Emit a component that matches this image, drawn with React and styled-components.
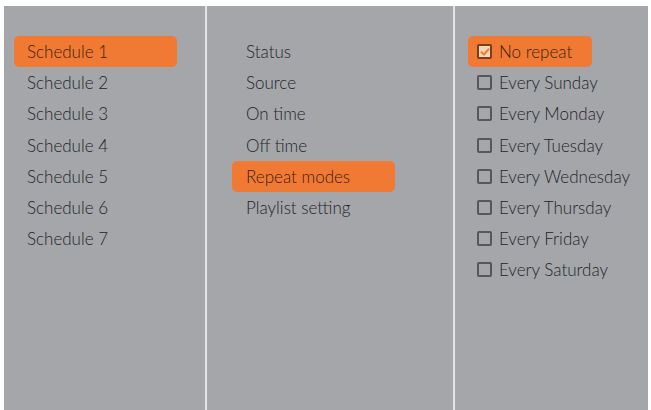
import React from "react";
import styled, { createGlobalStyle } from "styled-components";

const schedules = [
  "Schedule 1",
  "Schedule 2",
  "Schedule 3",
  "Schedule 4",
  "Schedule 5",
  "Schedule 6",
  "Schedule 7",
];

const settings = [
  "Status",
  "Source",
  "On time",
  "Off time",
  "Repeat modes",
  "Playlist setting",
];

const repeats = [
  "No repeat",
  "Every Sunday",
  "Every Monday",
  "Every Tuesday",
  "Every Wednesday",
  "Every Thursday",
  "Every Friday",
  "Every Saturday",
];

const Check = ({ checked }) => (
  <Box checked={checked}>
    {checked && (
      <svg width="10" height="10" viewBox="0 0 10 10">
        <path
          d="M1.5 5.2 L4 7.6 L8.6 2.2"
          fill="none"
          stroke="#f07a30"
          strokeWidth="2"
          strokeLinecap="round"
          strokeLinejoin="round"
        />
      </svg>
    )}
  </Box>
);

const App = () => {
  return (
    <>
      <GlobalStyle />
      <Screen>
        <Column width="201px" inset="10px" pad="13px">
          {schedules.map((s, i) => (
            <Item key={s} active={i === 0}>
              {s}
            </Item>
          ))}
        </Column>
        <Divider />
        <Column width="246px" inset="25px" pad="14px">
          {settings.map((s) => (
            <Item key={s} active={s === "Repeat modes"}>
              {s}
            </Item>
          ))}
        </Column>
        <Divider />
        <Column inset="13px" pad="9px" narrow>
          {repeats.map((s, i) => (
            <Item key={s} active={i === 0}>
              <Check checked={i === 0} />
              {s}
            </Item>
          ))}
        </Column>
      </Screen>
    </>
  );
};

const GlobalStyle = createGlobalStyle`
  html, body {
    margin: 0;
    background: #ffffff;
  }
  body {
    font-family: Lato, "Open Sans", sans-serif;
  }
`;

const Screen = styled.div`
  display: flex;
  margin: 6px 3px 0 4px;
  height: 404px;
  background: #a4a6aa;
`;

const Divider = styled.div`
  width: 2px;
  background: #e4e5e8;
`;

const Column = styled.div`
  display: flex;
  flex-direction: column;
  width: ${(p) => p.width || "auto"};
  flex: ${(p) => (p.width ? "none" : "1")};
  padding: 30px 0 0 ${(p) => p.inset};
  box-sizing: border-box;
  --pad: ${(p) => p.pad};
  --hl: ${(p) => (p.narrow ? "124px" : "163px")};
`;

const Item = styled.div`
  display: flex;
  align-items: center;
  gap: 7px;
  height: 31.2px;
  width: var(--hl);
  box-sizing: border-box;
  padding-left: var(--pad);
  font-size: 17px;
  font-weight: 300;
  color: ${(p) => (p.active ? "#3e200e" : "#232428")};
  background: ${(p) => (p.active ? "#f07a34" : "transparent")};
  border-radius: 5px;
  white-space: nowrap;
`;

const Box = styled.span`
  flex-shrink: 0;
  display: inline-flex;
  align-items: center;
  justify-content: center;
  width: 15px;
  height: 15px;
  box-sizing: border-box;
  border: 2px solid ${(p) => (p.checked ? "#7a3e1c" : "#55575c")};
  border-radius: 2px;
  background: ${(p) => (p.checked ? "#f6d6b6" : "transparent")};
`;

export default App;
